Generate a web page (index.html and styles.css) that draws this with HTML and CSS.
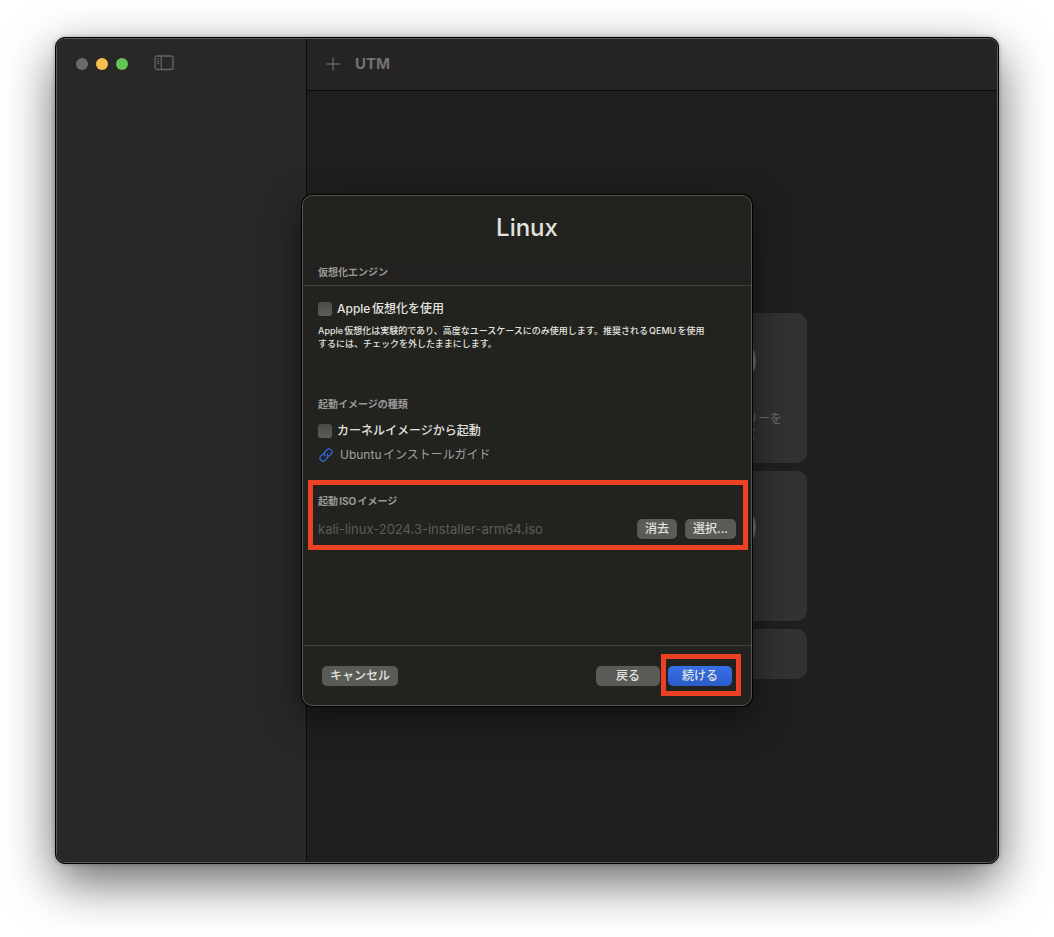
FILE: index.html
```html
<!DOCTYPE html>
<html lang="ja">
<head>
<meta charset="utf-8">
<meta name="viewport" content="width=device-width, initial-scale=1">
<title>UTM</title>
<link rel="stylesheet" href="styles.css">
</head>
<body>
<div class="window">
  <aside class="sidebar">
    <div class="lights">
      <span class="light light-close"></span>
      <span class="light light-minimize"></span>
      <span class="light light-zoom"></span>
    </div>
    <button class="icon-button" type="button" aria-label="サイドバー">
      <svg width="20" height="16" viewBox="0 0 20 16" fill="none" stroke="currentColor">
        <rect x="1" y="1" width="18" height="13.5" rx="2" stroke-width="1.3"/>
        <path d="M7.2 1v13.5" stroke-width="1.2"/>
        <path d="M3 4.2h2.2M3 6.4h2.2M3 8.6h2.2" stroke-width="1"/>
      </svg>
    </button>
  </aside>
  <main class="pane">
    <header class="toolbar">
      <button class="icon-button" type="button" aria-label="追加">
        <svg width="14" height="14" viewBox="0 0 14 14" fill="none" stroke="currentColor" stroke-width="1.3">
          <path d="M7 .5v13M.5 7h13"/>
        </svg>
      </button>
      <h1 class="app-title">UTM</h1>
    </header>
    <div class="welcome">
      <div class="cards">
        <div class="card"></div>
        <button class="card" type="button">
          <span class="disc"></span>
          <span>UTMギャラリーを<br>ブラウズ</span>
        </button>
        <div class="card"></div>
        <div class="card card-low"><span class="disc"></span></div>
        <div class="card card-wide"></div>
      </div>
    </div>
  </main>

  <div class="overlay">
    <form class="sheet" role="dialog" aria-labelledby="sheet-title">
      <h2 class="sheet-title" id="sheet-title">Linux</h2>
      <h3 class="section-label section-band">仮想化エンジン</h3>
      <div class="sheet-body">
        <section class="engine">
          <label class="check"><input type="checkbox"><span>Apple仮想化を使用</span></label>
          <p class="hint">Apple仮想化は実験的であり、高度なユースケースにのみ使用します。推奨されるQEMUを使用するには、チェックを外したままにします。</p>
        </section>
        <section class="boot">
          <h3 class="section-label">起動イメージの種類</h3>
          <label class="check"><input type="checkbox"><span>カーネルイメージから起動</span></label>
          <a class="guide" href="#guide">
            <svg width="14" height="14" viewBox="0 0 14 14" fill="none" stroke="currentColor" stroke-width="1.3" stroke-linecap="round">
              <path d="M5.3 5.2 3 6.8 1.8 8.1a2.9 2.9 0 0 0 4.1 4.1l2-2a2.9 2.9 0 0 0 .1-4"/>
              <path d="M8.7 8.8 11 7.2l1.2-1.3a2.9 2.9 0 0 0-4.1-4.1l-2 2a2.9 2.9 0 0 0-.1 4"/>
            </svg>
            <span>Ubuntuインストールガイド</span>
          </a>
        </section>
        <section class="iso">
          <h3 class="section-label">起動ISOイメージ</h3>
          <div class="file-row">
            <span class="file-name">kali-linux-2024.3-installer-arm64.iso</span>
            <button class="button" type="button">消去</button>
            <button class="button" type="button">選択...</button>
          </div>
        </section>
      </div>
      <footer class="sheet-footer">
        <button class="button" type="button">キャンセル</button>
        <button class="button button-step button-back" type="button">戻る</button>
        <span class="marked"><button class="button button-step button-primary" type="button">続ける</button></span>
      </footer>
    </form>
  </div>
</div>
</body>
</html>
```
FILE: styles.css
```css
* { box-sizing: border-box; }

body {
  margin: 0;
  min-height: 100vh;
  padding: 37px 55px 73px;
  display: flex;
  background: #fff;
  font: 12px/16px Inter, "Noto Sans CJK JP", sans-serif;
  text-autospace: normal;
  color: #e2e2df;
}

h1, h2, h3, p { margin: 0; }

button { font: inherit; color: inherit; border: 0; padding: 0; background: none; }

.window {
  position: relative;
  flex: 1;
  display: flex;
  border: 1px solid #000;
  border-radius: 10px;
  background: #1f1f1e;
  box-shadow: inset 0 0 0 1px #5a5a59, 0 18px 50px rgba(0, 0, 0, .6), 0 0 4px rgba(0, 0, 0, .3);
  padding: 1px;
}

.sidebar {
  width: 250px;
  display: flex;
  align-items: flex-start;
  gap: 26px;
  padding: 16px 20px 0 19px;
  border-right: 1px solid #0c0c0c;
  border-radius: 8px 0 0 8px;
  background: #282827;
}

.lights { display: flex; gap: 8px; padding-top: 3px; }
.light { width: 12px; height: 12px; border-radius: 50%; }
.light-close { background: #6a6a69; }
.light-minimize { background: #f5bf4f; }
.light-zoom { background: #61c554; }

.icon-button { display: flex; color: #666665; }

.pane { flex: 1; display: flex; flex-direction: column; }

.toolbar {
  height: 52px;
  display: flex;
  align-items: center;
  gap: 15px;
  padding: 0 19px 2px;
  border-bottom: 1px solid #0c0c0c;
  border-radius: 0 8px 0 0;
  background: #252324;
}

.app-title { font-size: 15px; line-height: 20px; font-weight: 700; color: #737172; }

.welcome {
  flex: 1;
  display: flex;
  align-items: center;
  justify-content: center;
  padding-top: 38px;
}

.cards { display: grid; grid-template-columns: 151px 151px; gap: 8px; }

.card {
  height: 150px;
  padding-top: 24px;
  display: flex;
  flex-direction: column;
  align-items: center;
  gap: 26px;
  border-radius: 10px;
  background: #323231;
  color: #6c6c6b;
}

.card-low { padding-top: 32px; }
.card-wide { grid-column: span 2; height: 50px; }

.disc { width: 48px; height: 48px; border-radius: 50%; background: #6c6c6b; }

.overlay {
  position: absolute;
  inset: 0;
  display: grid;
  place-items: center;
}

.sheet {
  width: 450px;
  max-width: 100%;
  border: 1px solid #565753;
  border-radius: 10px;
  background: #22231f;
  box-shadow: 0 0 0 1px #000, 0 12px 36px rgba(0, 0, 0, .55);
}

.sheet-title {
  padding: 16px 0 14px;
  text-align: center;
  font-size: 24px;
  line-height: 32px;
  font-weight: 500;
}

.section-label { font-size: 10px; line-height: 14px; font-weight: 700; color: #9a9a97; }

.section-band {
  padding: 7px 15px 6px;
  border-bottom: 1px solid #41413e;
  background: #23211f;
}

.sheet-body { padding: 14px 15px 95px; }

.check { display: flex; align-items: center; gap: 5px; font-weight: 500; }
.check span { padding-top: 1px; }

.check input {
  appearance: none;
  width: 14px;
  height: 14px;
  margin: 0;
  border-radius: 3px;
  background: linear-gradient(#4a4b48, #5d5e5b);
}

.hint { padding: 7px 28px 0 0; font-size: 9px; line-height: 13px; font-weight: 500; }

.boot { padding-top: 47px; }
.boot .check { padding-top: 11px; }

.guide {
  display: flex;
  align-items: center;
  gap: 7px;
  margin: 8px 1px 0;
  color: #2f68de;
  text-decoration: none;
}

.guide span { color: #a0a09d; }

.iso {
  margin: 17px -12px 0 -10px;
  padding: 9px 7px 6px 5px;
  border: 5px solid #ec4125;
}

.file-row { display: flex; align-items: center; gap: 8px; padding-top: 11px; }

.file-name { flex: 1; font-size: 13px; color: #5c5d59; }

.button {
  height: 20px;
  padding: 0 8px;
  border-radius: 5px;
  background: #5a5b57;
  font-weight: 500;
  line-height: 20px;
  white-space: nowrap;
}

.button-step { width: 64px; }
.button-back { margin-left: auto; }
.button-primary { background: linear-gradient(#3870e8, #2a5cc9); }

.sheet-footer {
  display: flex;
  align-items: center;
  gap: 8px;
  padding: 20px 19px 19px;
  border-top: 1px solid #41413e;
}

.marked { position: relative; display: flex; }

.marked::after {
  content: "";
  position: absolute;
  inset: -12px -9px -10px -7px;
  border: 5px solid #ec4125;
  pointer-events: none;
}
```
